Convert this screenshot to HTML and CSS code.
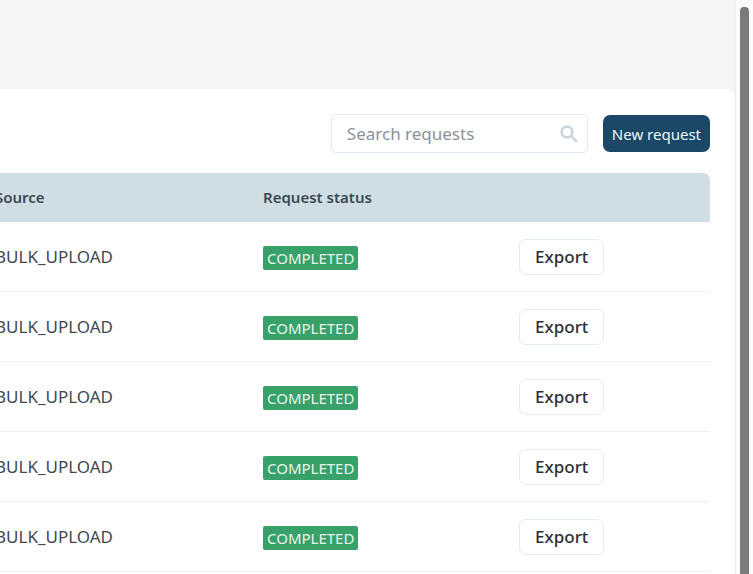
FILE: index.html
```
<!DOCTYPE html>
<html lang="en">
<head>
  <meta charset="UTF-8">
  <title>Requests</title>
  <link rel="stylesheet" href="styles.css">
</head>
<body>
  <main class="page">
    <div class="panel">
      <div class="toolbar">
        <div class="search">
          <input type="text" id="search" placeholder="Search requests" aria-label="Search requests">
          <svg class="search-icon" viewBox="0 0 18 18" aria-hidden="true">
            <circle cx="7" cy="7" r="5.4"/>
            <path d="M11.2 11.2L16.2 16.2"/>
          </svg>
        </div>
        <button class="btn-primary">New request</button>
      </div>

      <table class="requests">
        <thead>
          <tr>
            <th class="col-source">Source</th>
            <th class="col-status">Request status</th>
            <th class="col-actions"></th>
          </tr>
        </thead>
        <tbody>
          <tr>
            <td>BULK_UPLOAD</td>
            <td><span class="badge">COMPLETED</span></td>
            <td><button class="btn-export">Export</button></td>
          </tr>
          <tr>
            <td>BULK_UPLOAD</td>
            <td><span class="badge">COMPLETED</span></td>
            <td><button class="btn-export">Export</button></td>
          </tr>
          <tr>
            <td>BULK_UPLOAD</td>
            <td><span class="badge">COMPLETED</span></td>
            <td><button class="btn-export">Export</button></td>
          </tr>
          <tr>
            <td>BULK_UPLOAD</td>
            <td><span class="badge">COMPLETED</span></td>
            <td><button class="btn-export">Export</button></td>
          </tr>
          <tr>
            <td>BULK_UPLOAD</td>
            <td><span class="badge">COMPLETED</span></td>
            <td><button class="btn-export">Export</button></td>
          </tr>
        </tbody>
      </table>
    </div>
  </main>
  <div class="scroll-track">
    <div class="scroll-thumb"></div>
  </div>
</body>
</html>
```
FILE: styles.css
```
* {
  box-sizing: border-box;
}
body {
  font-family: "Noto Sans", sans-serif;
  margin: 0;
  display: flex;
  height: 100vh;
  overflow: hidden;
  background: #fff;
  color: #42474e;
}
input, button {
  font-family: inherit;
}
.page {
  flex: 1;
  min-width: 0;
  padding-top: 89px;
  background: #f3f5f7;
}
.panel {
  min-height: 100%;
  padding: 25px 25px 0 0;
  background: #fff;
  border-top-right-radius: 8px;
}
.toolbar {
  display: flex;
  justify-content: flex-end;
  align-items: center;
  gap: 15px;
  margin-bottom: 20px;
}
.search {
  position: relative;
  width: 257px;
}
.search input {
  display: block;
  width: 100%;
  height: 39px;
  padding: 0 40px 0 15px;
  font-size: 17px;
  color: #42474e;
  background: #fff;
  border: 1px solid #e2e8eb;
  border-radius: 5px;
}
.search input::placeholder {
  color: #8a9299;
}
.search-icon {
  position: absolute;
  top: 11px;
  right: 10px;
  width: 18px;
  height: 18px;
  fill: none;
  stroke: #cbd5dd;
  stroke-width: 2.6;
  stroke-linecap: round;
}
.btn-primary {
  height: 37px;
  padding: 0 9px;
  font-size: 15px;
  color: #f2f7fa;
  background: #1a4866;
  border: none;
  border-radius: 7px;
}
.requests {
  width: calc(100% + 5px);
  margin-left: -5px;
  table-layout: fixed;
  border-collapse: separate;
  border-spacing: 0;
  text-align: left;
}
th, td {
  padding: 0;
}
th {
  height: 49px;
  padding-bottom: 2px;
  font-size: 15px;
  font-weight: 600;
  line-height: 20px;
  color: #3c4a54;
  background: #cfdde4;
}
th:last-child {
  border-top-right-radius: 7px;
}
.col-source {
  width: 268px;
}
.col-status {
  width: 256px;
}
td {
  height: 70px;
  font-size: 17px;
  border-bottom: 1px solid #eef0f1;
}
.badge {
  display: block;
  width: fit-content;
  margin-top: 2px;
  padding: 0 4px;
  font-size: 15px;
  line-height: 24px;
  color: #e6f6ec;
  background: #38a169;
  border-radius: 2px;
}
.btn-export {
  display: block;
  height: 36px;
  padding: 0 15px;
  font-size: 17px;
  font-weight: 500;
  color: #2b2f38;
  background: #fff;
  border: 1px solid #e6ebed;
  border-radius: 7px;
}
.scroll-track {
  width: 18px;
  padding: 7px 4px 0;
  background: #fbfbfb;
  border-left: 1px solid #ececec;
}
.scroll-thumb {
  width: 9px;
  height: 100%;
  background: #7a7a7a;
  border-radius: 4px 4px 0 0;
}
```
